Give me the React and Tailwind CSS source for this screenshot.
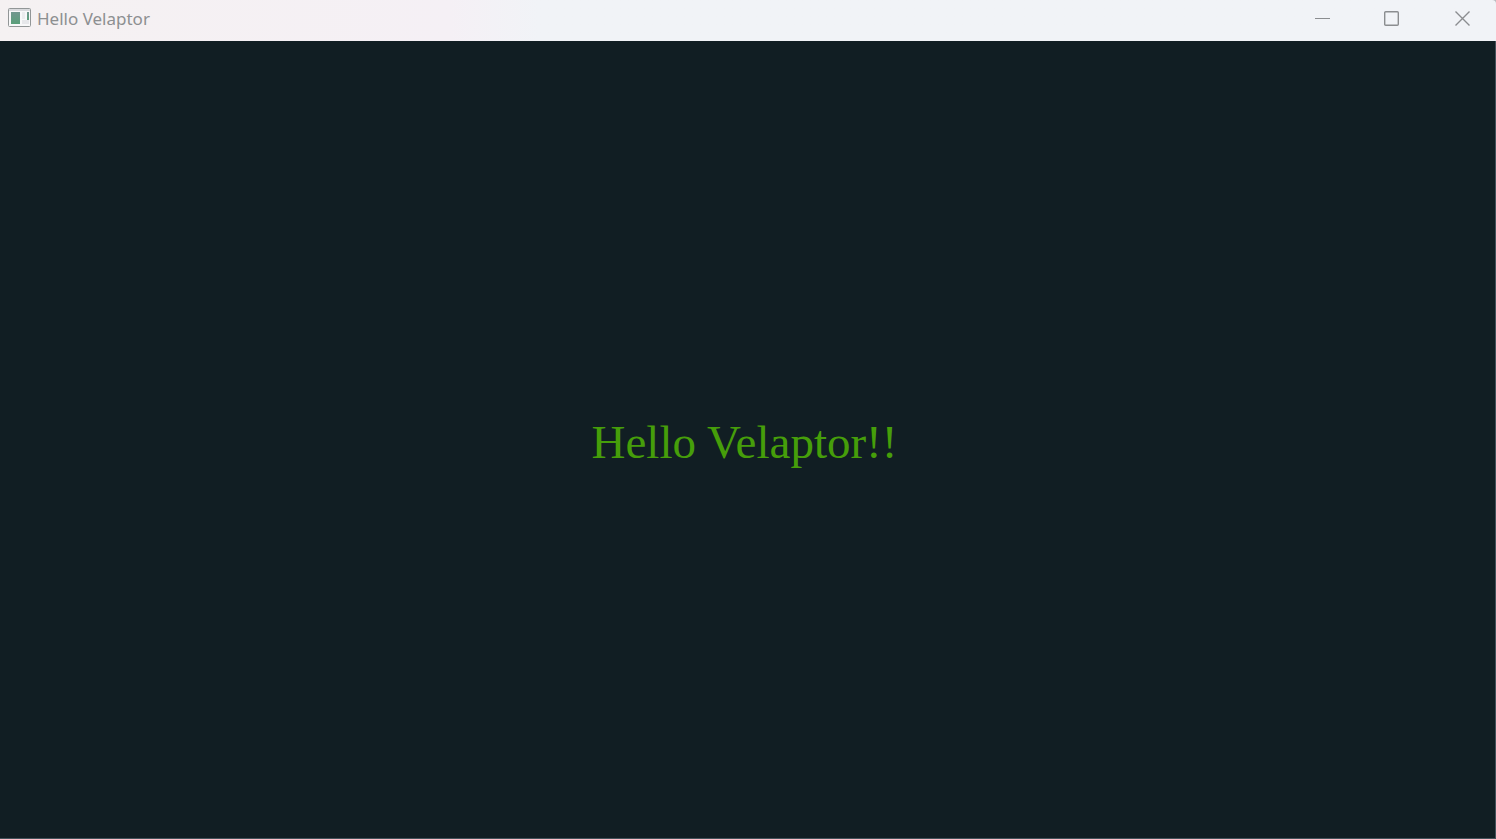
function AppIcon() {
  return (
    <svg width="23" height="19" viewBox="0 0 23 19" aria-hidden="true">
      <defs>
        <linearGradient id="pane" x1="0" y1="0" x2="0" y2="1">
          <stop offset="0" stopColor="#72978f" />
          <stop offset="1" stopColor="#5a9f7a" />
        </linearGradient>
      </defs>
      <rect x="0.5" y="0.5" width="22" height="18" rx="1" fill="#f8f8f9" stroke="#929697" />
      <rect x="1" y="1" width="21" height="2" fill="#d9dadd" />
      <rect x="3" y="4" width="9" height="12" fill="url(#pane)" />
      <rect x="14" y="4" width="3" height="7" fill="#ebecee" />
      <rect x="14" y="12" width="7" height="4" fill="#e6e7ea" />
      <rect x="19" y="4" width="2" height="8" fill="url(#pane)" />
    </svg>
  );
}

function WindowButton({ label, children }) {
  return (
    <button type="button" aria-label={label} className="flex h-full w-[70px] items-center justify-center pl-0.5 text-[#8b8d90]">
      <svg width="16" height="17" viewBox="0 0 16 17" fill="none" stroke="currentColor" aria-hidden="true">
        {children}
      </svg>
    </button>
  );
}

export default function App() {
  return (
    <div className="flex min-h-screen flex-col bg-[#b9bbbf]">
      <header className="flex h-[41px] shrink-0 items-stretch justify-between rounded-tr-sm bg-linear-to-r from-[#f5f1f2] via-[#f5f0f5] via-30% to-[#f1f3f7] to-36% pb-1.5">
        <div className="flex items-center gap-1.5 pl-2">
          <AppIcon />
          <h1 className="pt-0.5 font-['Noto_Sans',sans-serif] text-[17px] leading-6 text-[#8d8f91]">Hello Velaptor</h1>
        </div>
        <div className="flex">
          <WindowButton label="Minimize">
            <path d="M1 9.5h15" />
          </WindowButton>
          <WindowButton label="Maximize">
            <rect x="0.7" y="2.7" width="13.6" height="13.6" rx="1" strokeWidth="1.4" />
          </WindowButton>
          <WindowButton label="Close">
            <path d="M1.5 2.5l14 14M15.5 2.5l-14 14" strokeWidth="1.4" />
          </WindowButton>
        </div>
      </header>
      <main className="flex grow items-center justify-center border-r border-b border-[#44525a] bg-[#111e23] pt-1 pr-1.5">
        <p className="font-['Liberation_Serif',serif] text-[47px] leading-12 text-[#469e0a]">Hello Velaptor!!</p>
      </main>
    </div>
  );
}
